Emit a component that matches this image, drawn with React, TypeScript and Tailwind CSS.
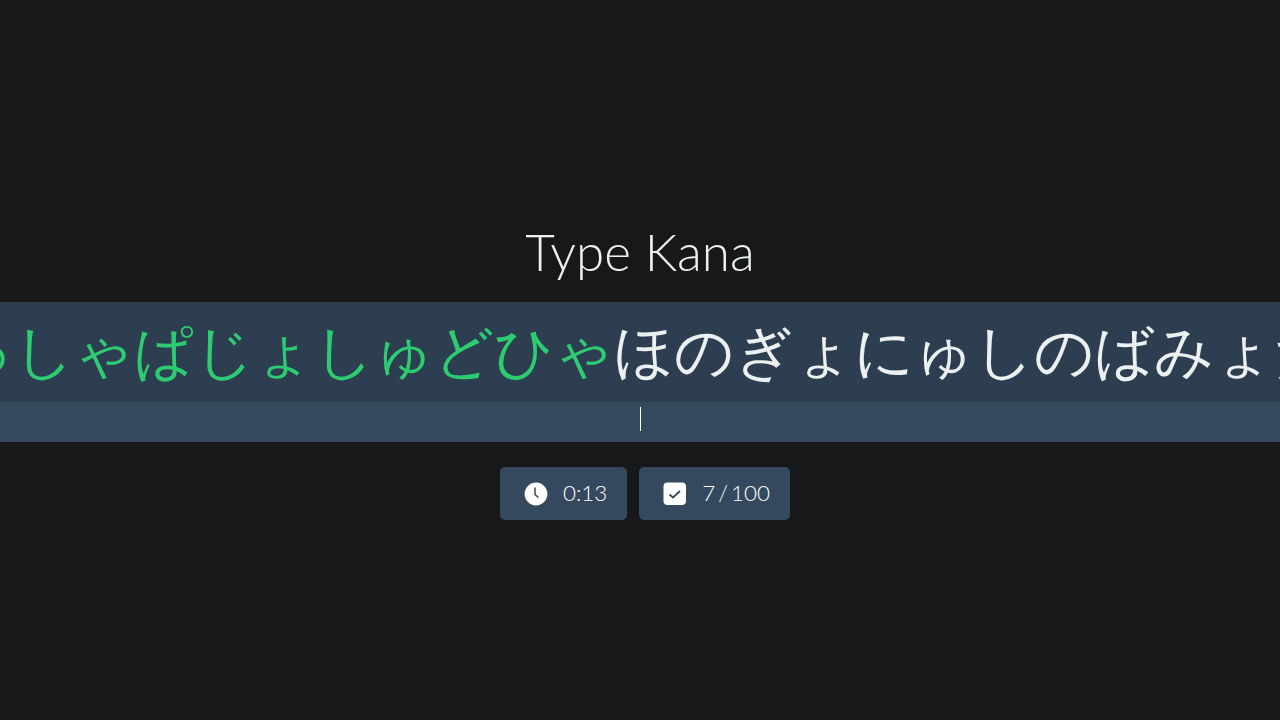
export default function App() {
  return (
    <div className="h-[720px] overflow-hidden bg-[#17181a] flex flex-col items-center font-['Lato',sans-serif] font-light pt-[220px]">
      <h1 className="text-[51.2px] leading-[62px] font-light text-[#ecf0f1] mb-[20px]">Type Kana</h1>
      <div className="w-full h-[100px] pb-[5px] bg-[#2c3e50] overflow-hidden flex items-center whitespace-nowrap text-[59.2px] leading-[95px]">
        <span className="shrink-0 ml-[-46px] text-[#2ecc71]">ゅしゃぱじょしゅどひゃ</span>
        <span className="shrink-0 text-[#ecf0f1]">ほのぎょにゅしのばみょた</span>
      </div>
      <div className="w-full h-[40px] bg-[#34495e] flex justify-center pt-[5px]">
        <div className="w-px h-[24px] bg-white" />
      </div>
      <div className="flex gap-3 mt-[25px] ml-[10px]">
        <div className="h-[53px] pl-[24px] pr-[20px] flex items-center gap-[15px] rounded-[5px] bg-[#34495e] text-white text-[22.4px]">
          <svg width="24" height="24" viewBox="0 0 24 24"><circle cx="12" cy="12" r="11.4" fill="#fff"/><path d="M11 5.5v7l3.5 3" fill="none" stroke="#34495e" strokeWidth="1.5"/></svg>
          <span className="mb-[2px]">0:13</span>
        </div>
        <div className="h-[53px] pl-[24px] pr-[20px] flex items-center gap-[15px] rounded-[5px] bg-[#34495e] text-white text-[22.4px] [word-spacing:-3px]">
          <svg width="24" height="24" viewBox="0 0 24 24"><rect x="0.5" y="0.5" width="22.5" height="22.5" rx="4" fill="#fff"/><path d="M6.5 12.5l3.5 3 7-6.5" fill="none" stroke="#34495e" strokeWidth="1.8"/></svg>
          <span className="mb-[2px]">7 / 100</span>
        </div>
      </div>
    </div>
  );
}
